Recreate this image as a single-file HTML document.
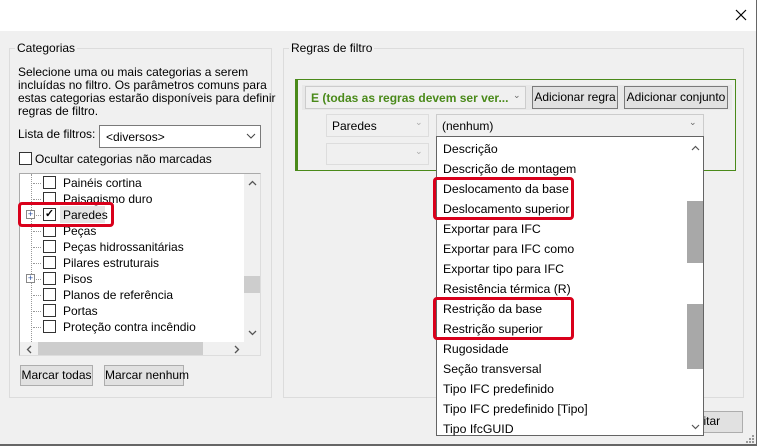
<!DOCTYPE html>
<html><head><style>
*{box-sizing:border-box;margin:0;padding:0}
body{width:757px;height:446px;overflow:hidden;background:#f0f0f0;font-family:"Liberation Sans",sans-serif;font-size:12px;color:#000;position:relative}
.a{position:absolute}
.grp{position:absolute;border:1px solid #dcdcdc}
.lbl{position:absolute;background:#f0f0f0;padding:0 2px;white-space:nowrap}
.t{position:absolute;white-space:nowrap}
.btn{position:absolute;background:#e1e1e1;border:1px solid #adadad;text-align:center;line-height:19px;white-space:nowrap}
.cb{position:absolute;width:13px;height:13px;border:1px solid #333;background:#fff}
.combo{position:absolute;background:#fff;border:1px solid #7a7a7a}
.chev{position:absolute;font-size:9px;color:#666}
.red{position:absolute;border:3px solid #d9001b;border-radius:4px}
.dl{position:absolute;left:33px;width:8px;border-top:1px dotted #999}
</style></head><body>
<div class="a" style="left:0;top:0;width:757px;height:31px;background:#fff"></div>
<svg class="a" style="left:735px;top:9px" width="12" height="12"><path d="M1 1L11 11M11 1L1 11" stroke="#000" stroke-width="1.2"/></svg>
<div class="a" style="left:756px;top:0;width:1px;height:446px;background:#666"></div>
<div class="a" style="left:0;top:444px;width:757px;height:2px;background:#666"></div>

<!-- left group -->
<div class="grp" style="left:9px;top:48px;width:263px;height:350px"></div>
<div class="lbl" style="left:15px;top:41px">Categorias</div>
<div class="t" style="left:18px;top:66px;line-height:13px">Selecione uma ou mais categorias a serem<br>incluídas no filtro. Os parâmetros comuns para<br>estas categorias estarão disponíveis para definir<br>regras de filtro.</div>
<div class="t" style="left:18px;top:127px">Lista de filtros:</div>
<div class="combo" style="left:99px;top:125px;width:162px;height:23px"><span class="t" style="left:6px;top:4px">&lt;diversos&gt;</span></div>
<svg class="a" style="left:246px;top:133px" width="10" height="6"><path d="M1 1L5 5L9 1" stroke="#444" fill="none"/></svg>
<div class="cb" style="left:19px;top:152px"></div>
<div class="t" style="left:35px;top:152px">Ocultar categorias não marcadas</div>
<div class="a" style="left:19px;top:173px;width:242px;height:183px;background:#fff;border:1px solid #aaa;border-right-color:#ddd;border-bottom-color:#ddd;overflow:hidden">
 <div class="a" style="left:11px;top:0;height:170px;border-left:1px dotted #999"></div>
</div>
<div class="dl" style="top:183px"></div><div class="dl" style="top:199px"></div><div class="dl" style="top:215px"></div><div class="dl" style="top:231px"></div><div class="dl" style="top:247px"></div><div class="dl" style="top:263px"></div><div class="dl" style="top:279px"></div><div class="dl" style="top:295px"></div><div class="dl" style="top:311px"></div><div class="dl" style="top:327px"></div>
<div class="a" style="left:244px;top:174px;width:16px;height:168px;background:#f0f0f0"></div>
<div class="a" style="left:244px;top:276px;width:16px;height:17px;background:#cdcdcd"></div>
<svg class="a" style="left:248px;top:180px" width="9" height="6"><path d="M1 5L4.5 1.5L8 5" stroke="#555" stroke-width="1.3" fill="none"/></svg>
<svg class="a" style="left:248px;top:330px" width="9" height="6"><path d="M1 1L4.5 4.5L8 1" stroke="#555" stroke-width="1.3" fill="none"/></svg>
<div class="a" style="left:20px;top:342px;width:240px;height:13px;background:#f0f0f0"></div>
<div class="a" style="left:38px;top:342px;width:165px;height:13px;background:#cdcdcd"></div>
<svg class="a" style="left:26px;top:345px" width="6" height="9"><path d="M5 1L1.5 4.5L5 8" stroke="#555" stroke-width="1.3" fill="none"/></svg>
<svg class="a" style="left:234px;top:345px" width="6" height="9"><path d="M1 1L4.5 4.5L1 8" stroke="#555" stroke-width="1.3" fill="none"/></svg>
<div class="btn" style="left:20px;top:365px;width:73px;height:21px">Marcar todas</div>
<div class="btn" style="left:104px;top:365px;width:80px;height:21px">Marcar nenhum</div>

<!-- tree rows -->
<div class="a" style="left:60px;top:206px;width:45px;height:17px;background:#e5e5e5"></div>
<div class="cb" style="left:43px;top:176px"></div><div class="t" style="left:63px;top:176px">Painéis cortina</div>
<div class="cb" style="left:43px;top:192px"></div><div class="t" style="left:63px;top:192px">Paisagismo duro</div>
<div class="cb" style="left:43px;top:208px;text-align:center;line-height:10px;font-size:11px;font-weight:bold">✓</div><div class="t" style="left:63px;top:208px">Paredes</div>
<div class="cb" style="left:43px;top:224px"></div><div class="t" style="left:63px;top:224px">Peças</div>
<div class="cb" style="left:43px;top:240px"></div><div class="t" style="left:63px;top:240px">Peças hidrossanitárias</div>
<div class="cb" style="left:43px;top:256px"></div><div class="t" style="left:63px;top:256px">Pilares estruturais</div>
<div class="cb" style="left:43px;top:272px"></div><div class="t" style="left:63px;top:272px">Pisos</div>
<div class="cb" style="left:43px;top:288px"></div><div class="t" style="left:63px;top:288px">Planos de referência</div>
<div class="cb" style="left:43px;top:304px"></div><div class="t" style="left:63px;top:304px">Portas</div>
<div class="cb" style="left:43px;top:320px"></div><div class="t" style="left:63px;top:320px">Proteção contra incêndio</div>
<div class="a" style="left:26px;top:210px;width:9px;height:9px;border:1px solid #888;background:#fff;font-size:9px;line-height:7px;text-align:center;color:#2a4fa0">+</div>
<div class="a" style="left:26px;top:274px;width:9px;height:9px;border:1px solid #888;background:#fff;font-size:9px;line-height:7px;text-align:center;color:#2a4fa0">+</div>
<div class="red" style="left:18px;top:202px;width:96px;height:25px"></div>

<!-- right group -->
<div class="grp" style="left:283px;top:48px;width:461px;height:350px"></div>
<div class="lbl" style="left:289px;top:41px">Regras de filtro</div>
<div class="a" style="left:295px;top:79px;width:441px;height:92px;border:1px solid #4a8a1a;border-left:3px solid #4a8a1a"></div>
<div class="a" style="left:302px;top:85px;width:430px;height:25px;background:#e8e8e8"></div>
<div class="a" style="left:305px;top:86px;width:221px;height:23px;background:#f0f0f0;border:1px solid #ccc"></div>
<div class="t" style="left:311px;top:91px;color:#4a8a1a;font-weight:bold">E (todas as regras devem ser ver...</div>
<div class="chev" style="left:513px;top:90px">⌄</div>
<div class="btn" style="left:532px;top:86px;width:86px;height:23px;line-height:21px;border-color:#7a7a7a">Adicionar regra</div>
<div class="btn" style="left:624px;top:86px;width:104px;height:23px;line-height:21px;border-color:#7a7a7a">Adicionar conjunto</div>
<div class="a" style="left:326px;top:114px;width:103px;height:23px;border:1px solid #ddd;background:#f0f0f0"></div>
<div class="t" style="left:332px;top:119px">Paredes</div>
<div class="chev" style="left:415px;top:117px;color:#aaa">⌄</div>
<div class="a" style="left:326px;top:143px;width:103px;height:22px;border:1px solid #ddd;background:#f0f0f0"></div>
<div class="chev" style="left:415px;top:146px;color:#aaa">⌄</div>
<div class="a" style="left:436px;top:114px;width:268px;height:23px;border:1px solid #ccc;background:#f0f0f0"></div>
<div class="t" style="left:442px;top:119px">(nenhum)</div>
<div class="chev" style="left:689px;top:117px">⌄</div>

<div class="btn" style="left:660px;top:411px;width:83px;height:22px">Aceitar</div>
<svg class="a" style="left:745px;top:434px" width="10" height="10"><g fill="#999"><rect x="7" y="1" width="2" height="2"/><rect x="4" y="4" width="2" height="2"/><rect x="7" y="4" width="2" height="2"/><rect x="1" y="7" width="2" height="2"/><rect x="4" y="7" width="2" height="2"/><rect x="7" y="7" width="2" height="2"/></g></svg>

<!-- dropdown -->
<div class="a" style="left:436px;top:136px;width:268px;height:300px;background:#fff;border:1px solid #646464">
 <div class="a" style="left:249px;top:0;width:17px;height:298px;background:#fff"></div>
 <div class="a" style="left:250px;top:64px;width:16px;height:62px;background:#a8a8a8"></div>
 <div class="a" style="left:250px;top:167px;width:16px;height:65px;background:#a8a8a8"></div>
 <svg class="a" style="left:254px;top:8px" width="9" height="6"><path d="M1 5L4.5 1.5L8 5" stroke="#555" stroke-width="1.2" fill="none"/></svg>
 <svg class="a" style="left:254px;top:287px" width="9" height="6"><path d="M1 1L4.5 4.5L8 1" stroke="#555" stroke-width="1.2" fill="none"/></svg>
 <div style="position:absolute;left:6px;top:2px;line-height:20px;font-size:12.3px">
 Descrição<br>Descrição de montagem<br>Deslocamento da base<br>Deslocamento superior<br>Exportar para IFC<br>Exportar para IFC como<br>Exportar tipo para IFC<br>Resistência térmica (R)<br>Restrição da base<br>Restrição superior<br>Rugosidade<br>Seção transversal<br>Tipo IFC predefinido<br>Tipo IFC predefinido [Tipo]<br>Tipo IfcGUID
 </div>
</div>
<div class="red" style="left:433px;top:177px;width:141px;height:43px"></div>
<div class="red" style="left:433px;top:297px;width:141px;height:43px"></div>
</body></html>
